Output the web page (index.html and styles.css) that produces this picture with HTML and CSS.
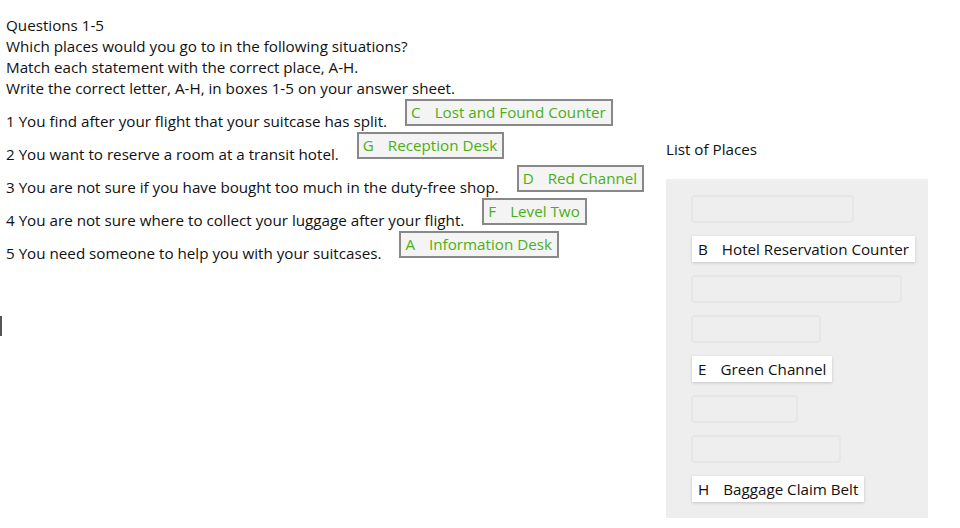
FILE: index.html
```html
<!DOCTYPE html>
<html>
<head>
<meta charset="utf-8">
<link rel="stylesheet" href="styles.css">
</head>
<body>
<div class="page">
  <div class="left">
    <div class="intro">
      <div>Questions 1-5</div>
      <div>Which places would you go to in the following situations?</div>
      <div>Match each statement with the correct place, A-H.</div>
      <div>Write the correct letter, A-H, in boxes 1-5 on your answer sheet.</div>
    </div>
    <div class="rows">
      <div class="row"><span class="stmt">1 You find after your flight that your suitcase has split.</span><span class="answer"><span class="ltr">C</span>Lost and Found Counter</span></div>
      <div class="row"><span class="stmt">2 You want to reserve a room at a transit hotel.</span><span class="answer"><span class="ltr">G</span>Reception Desk</span></div>
      <div class="row"><span class="stmt">3 You are not sure if you have bought too much in the duty-free shop.</span><span class="answer"><span class="ltr">D</span>Red Channel</span></div>
      <div class="row"><span class="stmt">4 You are not sure where to collect your luggage after your flight.</span><span class="answer"><span class="ltr">F</span>Level Two</span></div>
      <div class="row"><span class="stmt">5 You need someone to help you with your suitcases.</span><span class="answer"><span class="ltr">A</span>Information Desk</span></div>
    </div>
    <div class="caret"></div>
  </div>
  <div class="right">
    <div class="title">List of Places</div>
    <div class="panel">
      <div class="slot empty"><span class="card"><span class="ltr">A</span>Information Desk</span></div>
      <div class="slot"><span class="card"><span class="ltr">B</span>Hotel Reservation Counter</span></div>
      <div class="slot empty"><span class="card"><span class="ltr">C</span>Lost and Found Counter</span></div>
      <div class="slot empty"><span class="card"><span class="ltr">D</span>Red Channel</span></div>
      <div class="slot"><span class="card"><span class="ltr">E</span>Green Channel</span></div>
      <div class="slot empty"><span class="card"><span class="ltr">F</span>Level Two</span></div>
      <div class="slot empty"><span class="card"><span class="ltr">G</span>Reception Desk</span></div>
      <div class="slot"><span class="card"><span class="ltr">H</span>Baggage Claim Belt</span></div>
    </div>
  </div>
</div>
</body>
</html>
```
FILE: styles.css
```css
html, body {
  margin: 0;
  padding: 0;
  background: #fff;
}
body {
  font-family: "Open Sans", "Noto Sans", sans-serif;
  font-size: 15.2px;
  line-height: 21px;
  color: #111;
}
.page {
  display: grid;
  grid-template-columns: 666px 262px;
  height: 528px;
}
.left {
  padding: 15px 0 0 6px;
  display: flex;
  flex-direction: column;
}
.rows {
  display: flex;
  flex-direction: column;
}
.row {
  display: flex;
  align-items: flex-start;
  height: 33px;
}
.stmt {
  margin-top: 12px;
  white-space: nowrap;
}
.answer {
  margin-left: 18px;
  height: 27px;
  box-sizing: border-box;
  border: 2px solid #888;
  background: #f4f4f4;
  color: #4caf14;
  padding: 0 5px 0 4px;
  display: inline-flex;
  align-items: center;
  white-space: nowrap;
}
.ltr {
  margin-right: 14px;
}
.caret {
  margin-top: 52px;
  margin-left: -6px;
  width: 2px;
  height: 20px;
  background: #555;
}
.right {
  display: flex;
  flex-direction: column;
  padding-top: 139px;
}
.title {
  height: 21px;
  margin-bottom: 19px;
}
.panel {
  background: #eee;
  height: 339px;
  box-sizing: border-box;
  padding: 16px 0 0 25px;
  display: flex;
  flex-direction: column;
  align-items: flex-start;
  gap: 12px;
}
.slot {
  height: 28px;
  box-sizing: border-box;
  padding: 1px;
  display: flex;
}
.slot.empty {
  border: 2px solid #e7e7e7;
  border-radius: 4px;
  padding: 0;
}
.slot.empty .card {
  visibility: hidden;
  background: none;
  box-shadow: none;
}
.card {
  background: #fff;
  box-shadow: 0 1px 3px rgba(0,0,0,0.18);
  display: inline-flex;
  align-items: center;
  padding: 0 6px 0 6px;
  white-space: nowrap;
}
```
